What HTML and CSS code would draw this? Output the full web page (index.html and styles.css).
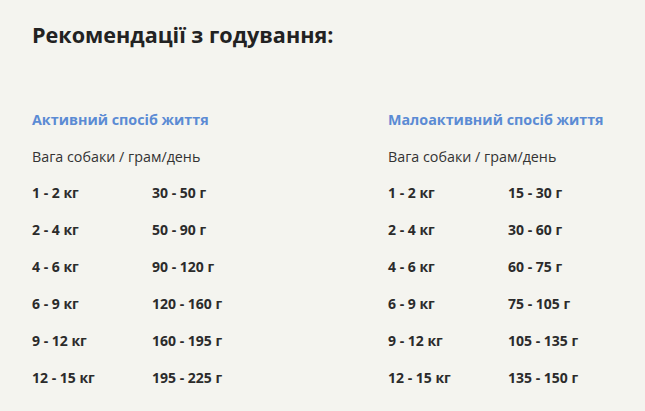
FILE: index.html
```html
<!DOCTYPE html>
<html lang="uk">
<head>
<meta charset="utf-8">
<link rel="stylesheet" href="styles.css">
</head>
<body>
<div class="page">
  <h2 class="title">Рекомендації з годування:</h2>
  <div class="tables">
    <section class="block">
      <h3 class="sub">Активний спосіб життя</h3>
      <p class="caption">Вага собаки / грам/день</p>
      <div class="rows">
        <div class="row"><span class="w">1 - 2 кг</span><span>30 - 50 г</span></div>
        <div class="row"><span class="w">2 - 4 кг</span><span>50 - 90 г</span></div>
        <div class="row"><span class="w">4 - 6 кг</span><span>90 - 120 г</span></div>
        <div class="row"><span class="w">6 - 9 кг</span><span>120 - 160 г</span></div>
        <div class="row"><span class="w">9 - 12 кг</span><span>160 - 195 г</span></div>
        <div class="row"><span class="w">12 - 15 кг</span><span>195 - 225 г</span></div>
      </div>
    </section>
    <section class="block">
      <h3 class="sub">Малоактивний спосіб життя</h3>
      <p class="caption">Вага собаки / грам/день</p>
      <div class="rows">
        <div class="row"><span class="w">1 - 2 кг</span><span>15 - 30 г</span></div>
        <div class="row"><span class="w">2 - 4 кг</span><span>30 - 60 г</span></div>
        <div class="row"><span class="w">4 - 6 кг</span><span>60 - 75 г</span></div>
        <div class="row"><span class="w">6 - 9 кг</span><span>75 - 105 г</span></div>
        <div class="row"><span class="w">9 - 12 кг</span><span>105 - 135 г</span></div>
        <div class="row"><span class="w">12 - 15 кг</span><span>135 - 150 г</span></div>
      </div>
    </section>
  </div>
</div>
</body>
</html>
```

FILE: styles.css
```css
html, body {
  margin: 0;
  padding: 0;
  background: #f4f4ef;
}
body {
  font-family: "Open Sans", "Noto Sans", sans-serif;
  color: #2b2b2b;
}
.page {
  padding: 20px 0 0 32px;
}
.title {
  margin: 0;
  font-size: 21.6px;
  line-height: 30px;
  font-weight: 700;
  color: #222;
}
.tables {
  display: grid;
  grid-template-columns: 356px 1fr;
  margin-top: 60px;
}
.sub {
  margin: 0;
  font-size: 14.3px;
  line-height: 20px;
  font-weight: 700;
  color: #5b8bd4;
}
.caption {
  margin: 17px 0 0;
  font-size: 14.3px;
  line-height: 20px;
  color: #333;
}
.rows {
  margin-top: 16px;
  display: flex;
  flex-direction: column;
  gap: 17px;
}
.row {
  display: flex;
  font-size: 14px;
  line-height: 20px;
  font-weight: 700;
  color: #2b2b2b;
}
.w {
  width: 120px;
  flex: none;
}
```
